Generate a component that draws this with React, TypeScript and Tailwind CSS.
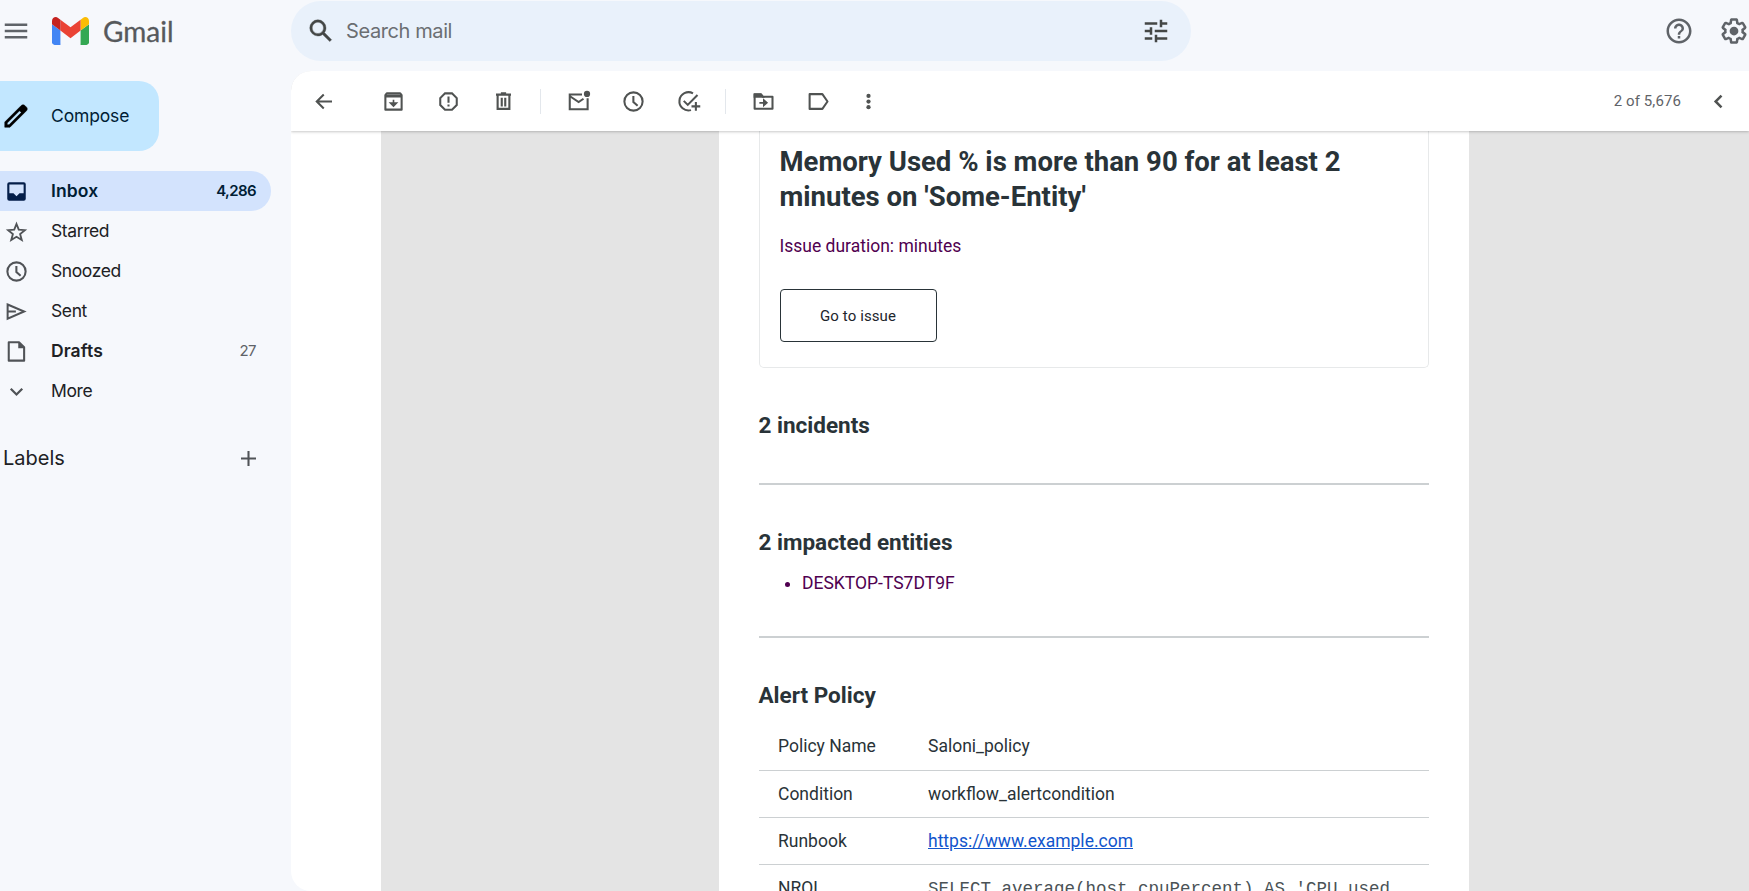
import type { ReactNode } from 'react';

type IconProps = { className?: string };

function Glyph({ children, className = 'size-[25px]', box = 20 }: { children: ReactNode; className?: string; box?: number }) {
  return (
    <svg viewBox={`0 0 ${box} ${box}`} className={className} fill="none" stroke="currentColor" strokeWidth={1.65}>
      {children}
    </svg>
  );
}

const MenuIcon = () => (
  <Glyph box={24} className="size-[30px] shrink-0">
    <path d="M3 7h18M3 12h18M3 17h18" strokeWidth={2} />
  </Glyph>
);

const GmailLogo = () => (
  <svg viewBox="52 42 88 66" className="h-7 w-[37px] shrink-0">
    <path fill="#4285f4" d="M58 108h14V74L52 59v43c0 3.32 2.69 6 6 6" />
    <path fill="#34a853" d="M120 108h14c3.32 0 6-2.69 6-6V59l-20 15" />
    <path fill="#fbbc04" d="M120 48v26l20-15v-8c0-7.42-8.47-11.65-14.4-7.2" />
    <path fill="#ea4335" d="M72 74V48l24 18 24-18v26L96 92" />
    <path fill="#c5221f" d="M52 51v8l20 15V48l-5.6-4.2c-5.94-4.45-14.4-.22-14.4 7.2" />
  </svg>
);

const SearchIcon = () => (
  <Glyph box={24} className="size-[30px] shrink-0">
    <path fill="currentColor" strokeWidth={0.3} d="M20.49 19l-5.73-5.73C15.53 12.2 16 10.91 16 9.5A6.5 6.5 0 1 0 9.5 16c1.41 0 2.7-.47 3.77-1.24L19 20.49 20.49 19zM5 9.5C5 7.01 7.01 5 9.5 5S14 7.01 14 9.5 11.99 14 9.5 14 5 11.99 5 9.5z" />
  </Glyph>
);

const TuneIcon = () => (
  <Glyph box={24} className="size-[30px] shrink-0">
    <path fill="currentColor" stroke="none" d="M3 17v2h6v-2H3zM3 5v2h10V5H3zm10 16v-2h8v-2h-8v-2h-2v6h2zM7 9v2H3v2h4v2h2V9H7zm14 4v-2H11v2h10zm-6-4h2V7h4V5h-4V3h-2v6z" />
  </Glyph>
);

const HelpIcon = () => (
  <Glyph box={24} className="size-[30px] shrink-0">
    <path fill="currentColor" stroke="none" d="M11 18h2v-2h-2v2zm1-16C6.48 2 2 6.48 2 12s4.48 10 10 10 10-4.48 10-10S17.52 2 12 2zm0 18c-4.41 0-8-3.59-8-8s3.59-8 8-8 8 3.59 8 8-3.59 8-8 8zm0-14c-2.21 0-4 1.79-4 4h2c0-1.1.9-2 2-2s2 .9 2 2c0 2-3 1.75-3 5h2c0-2.25 3-2.5 3-5 0-2.21-1.79-4-4-4z" />
  </Glyph>
);

const SettingsIcon = () => (
  <Glyph box={24} className="size-[30px] shrink-0">
    <path fill="currentColor" stroke="none" d="M13.85 22.25h-3.7c-.74 0-1.36-.54-1.45-1.27l-.27-1.89c-.27-.14-.53-.29-.79-.46l-1.8.72c-.7.26-1.47-.03-1.81-.65L2.2 15.53c-.35-.66-.2-1.44.36-1.88l1.53-1.19c-.01-.15-.02-.3-.02-.46 0-.15.01-.31.02-.46l-1.52-1.19c-.59-.45-.74-1.26-.37-1.88l1.85-3.19c.34-.62 1.11-.9 1.79-.63l1.81.73c.26-.17.52-.32.78-.46l.27-1.91c.09-.7.71-1.25 1.44-1.25h3.7c.74 0 1.36.54 1.45 1.27l.27 1.89c.27.14.53.29.79.46l1.8-.72c.71-.26 1.48.03 1.82.65l1.84 3.18c.36.66.2 1.44-.36 1.88l-1.52 1.19c.01.15.02.3.02.46s-.01.31-.02.46l1.52 1.19c.56.45.72 1.23.37 1.86l-1.86 3.22c-.34.62-1.11.9-1.8.63l-1.8-.72c-.26.17-.52.32-.78.46l-.27 1.91c-.1.68-.72 1.22-1.46 1.22zm-3.23-2h2.76l.37-2.55.53-.22c.44-.18.88-.44 1.34-.78l.45-.34 2.38.96 1.38-2.4-2.03-1.58.07-.56c.03-.26.06-.51.06-.78s-.03-.53-.06-.78l-.07-.56 2.03-1.58-1.39-2.4-2.39.96-.45-.35c-.42-.32-.87-.58-1.33-.77l-.52-.22-.37-2.55h-2.76l-.37 2.55-.53.21c-.44.19-.88.44-1.34.79l-.45.33-2.38-.95-1.39 2.39 2.03 1.58-.07.56a7 7 0 0 0-.06.79c0 .26.02.53.06.78l.07.56-2.03 1.58 1.38 2.4 2.39-.96.45.35c.43.33.86.58 1.33.77l.53.22.38 2.55z" />
    <circle cx="12" cy="12" r="3.5" fill="currentColor" stroke="none" />
  </Glyph>
);

const PencilIcon = () => (
  <Glyph box={24} className="size-[30px] shrink-0">
    <path fill="currentColor" strokeWidth={0.4} d="M20.41 4.94l-1.35-1.35c-.78-.78-2.05-.78-2.83 0L3 16.82V21h4.18L20.41 7.77c.79-.78.79-2.05 0-2.83zM6.41 19.06L5 19v-1.36l9.82-9.82 1.41 1.41-9.82 9.83z" />
  </Glyph>
);

const BackIcon = () => (
  <Glyph><path d="M10.2 4.4 4.6 10l5.6 5.6M4.6 10h12.2" /></Glyph>
);
const ArchiveIcon = () => (
  <Glyph>
    <path d="M4.6 3.5h10.8l1.100 1.400v11.600h-13V4.900z" strokeLinejoin="round" />
    <path d="M4 5.500h12" strokeWidth={2.400} />
    <path d="M10 8.600v4.500M7.700 11.300 10 13.600l2.300-2.300z" fill="currentColor" strokeWidth={1.300} />
  </Glyph>
);
const ReportIcon = () => (
  <Glyph>
    <path d="M7.200 3.500h5.600l3.800 3.800v5.500l-3.800 3.800H7.200l-3.800-3.800V7.300z" />
    <path d="M10 6v4.900M10 12.300v1.600" />
  </Glyph>
);
const TrashIcon = () => (
  <Glyph>
    <path d="M5.300 5v10.900h9.400V5M4 4.500h12M7.900 3.400h4.200" strokeWidth={1.700} />
    <path d="M8.600 7v7M11.400 7v7" strokeWidth={1.700} />
  </Glyph>
);
const UnreadIcon = () => (
  <Glyph>
    <path d="M12.800 4.400H3v11.800h14.300V7.400M3.200 5.800l6.900 4.600 3.900-2.600" />
    <circle cx="16.800" cy="3.900" r="2.500" fill="currentColor" stroke="none" />
  </Glyph>
);
const ClockIcon = ({ className }: IconProps) => (
  <Glyph className={className}>
    <circle cx="10" cy="10" r="7.300" />
    <path d="M9.900 5.500v4.900l3.400 3" />
  </Glyph>
);
const AddTaskIcon = () => (
  <Glyph>
    <path d="M13.600 3.500A7.300 7.300 0 1 0 12 16.900M6.200 9.500l3.200 3.200 7.800-7.900M15.900 10.400v7M12.400 13.900h7" />
  </Glyph>
);
const MoveIcon = () => (
  <Glyph>
    <path d="M2.900 4.400h5l1.600 1.800h7.700v9.600H2.900z" strokeLinejoin="round" />
    <path d="M2.900 4.300h5l1.500 1.900H2.900z" fill="currentColor" />
    <path d="M6.700 11h4.500M10.300 9l2.300 2-2.300 2z" fill="currentColor" strokeWidth={1.400} />
  </Glyph>
);
const LabelIcon = () => (
  <Glyph><path d="M2.900 4.100h10.200L17.200 10l-4.100 5.900H2.900z" strokeLinejoin="round" /></Glyph>
);
const MoreVertIcon = () => (
  <Glyph>
    <g fill="currentColor" stroke="none">
      <circle cx="10" cy="5.500" r="1.700" /><circle cx="10" cy="10" r="1.700" /><circle cx="10" cy="14.500" r="1.700" />
    </g>
  </Glyph>
);
const PrevIcon = () => (
  <Glyph><path d="M12.400 5.300 7.700 10l4.700 4.700" strokeWidth={2} /></Glyph>
);

const InboxIcon = () => (
  <Glyph>
    <path fill="currentColor" stroke="none" fillRule="evenodd" d="M4.200 2.600h11.600a1.600 1.600 0 0 1 1.600 1.600v11.600a1.600 1.600 0 0 1-1.600 1.600H4.200a1.600 1.600 0 0 1-1.600-1.600V4.200a1.600 1.600 0 0 1 1.600-1.600zM4.300 4.300v7.100h3.300L10 13.700l2.400-2.300h3.300V4.300z" />
  </Glyph>
);
const StarIcon = () => (
  <Glyph>
    <path d="m10 4 1.800 4.500 4.900.400-3.800 3.200 1.300 4.700-4.200-2.600-4.200 2.600 1.300-4.700-3.800-3.200 4.900-.400z" strokeWidth={1.500} />
  </Glyph>
);
const SendIcon = () => (
  <Glyph><path d="M2.900 4.400 16.100 10 2.900 15.700zM3 10h6.500" strokeWidth={1.600} /></Glyph>
);
const DraftIcon = () => (
  <Glyph>
    <path d="M3.800 2.600h8.200l4.100 4v10.700H3.800z" strokeLinejoin="round" />
    <path d="M11.400 2.200v5.100h4.900z" fill="currentColor" stroke="none" />
  </Glyph>
);
const ExpandIcon = () => (
  <Glyph><path d="m5.400 7.800 4.600 4.600 4.600-4.600" strokeWidth={1.800} /></Glyph>
);
const PlusIcon = () => (
  <Glyph><path d="M10 4v12M4 10h12" /></Glyph>
);

type Folder = { name: string; icon: ReactNode; count?: string; active?: boolean; bold?: boolean };

const folders: Folder[] = [
  { name: 'Inbox', icon: <InboxIcon />, count: '4,286', active: true, bold: true },
  { name: 'Starred', icon: <StarIcon /> },
  { name: 'Snoozed', icon: <ClockIcon /> },
  { name: 'Sent', icon: <SendIcon /> },
  { name: 'Drafts', icon: <DraftIcon />, count: '27', bold: true },
  { name: 'More', icon: <ExpandIcon /> },
];

function FolderRow({ name, icon, count, active, bold }: Folder) {
  return (
    <li className={`flex h-10 w-[271px] items-center rounded-r-full pr-[15px] pl-1 ${active ? 'bg-[#d3e3fd] text-[#001d35]' : 'text-[#202124]'}`}>
      <span className={`w-[47px] ${active ? 'text-[#041e49]' : 'text-[#505357]'}`}>{icon}</span>
      <span className={`grow text-[17.5px] ${bold ? 'font-semibold tracking-[0.1px]' : 'tracking-[-0.4px]'}`}>{name}</span>
      {count && <span className={`text-[15px] tracking-[-0.6px] ${active ? 'font-semibold' : 'text-[#5f6368]'}`}>{count}</span>}
    </li>
  );
}

function Sidebar() {
  return (
    <aside className="w-[291px] shrink-0 pt-2.5">
      <button className="flex h-[70px] w-[159px] items-center rounded-r-[20px] bg-[#c2e7ff] text-[17.5px] tracking-[-0.15px] text-[#001d35]">
        <span className="ml-px w-[50px] text-black"><PencilIcon /></span>
        Compose
      </button>
      <ul className="mt-5">
        {folders.map((f) => <FolderRow key={f.name} {...f} />)}
      </ul>
      <div className="mt-[27px] flex h-10 items-center justify-between pr-[30px] pl-[3px] text-[20px] text-[#202124]">
        <h3>Labels</h3>
        <span className="text-[#505357]"><PlusIcon /></span>
      </div>
    </aside>
  );
}

function Header() {
  return (
    <header className="flex h-[71px] shrink-0 items-start pt-px">
      <div className="flex h-[60px] w-[291px] items-center pl-px text-[#5f6368]">
        <MenuIcon />
        <span className="ml-[21px]"><GmailLogo /></span>
        <span className="ml-3.5 font-[Lato] text-[28px] text-[#56595c] [-webkit-text-stroke:0.3px_#56595c]">Gmail</span>
      </div>
      <div className="flex h-[60px] w-[900px] items-center rounded-full bg-[#e9f1fb] pr-5 pl-[15px] text-[#444746]">
        <SearchIcon />
        <span className="ml-2.5 grow text-[20px] tracking-[-0.4px] text-[#6b6e72]">Search mail</span>
        <TuneIcon />
      </div>
      <div className="ml-auto flex h-[60px] items-center gap-[25px] text-[#5f6368]">
        <HelpIcon />
        <SettingsIcon />
      </div>
    </header>
  );
}

function Tool({ children, className = 'w-[55px]' }: { children: ReactNode; className?: string }) {
  return <button className={`flex h-[60px] shrink-0 items-center justify-center ${className}`}>{children}</button>;
}

const Divider = () => <span className="mr-[10px] ml-[9px] h-[25px] w-px bg-[#e3e7ec]" />;

function Toolbar() {
  return (
    <div className="relative z-10 flex h-[60px] shrink-0 items-center rounded-tl-[20px] bg-white pl-[5px] text-[#505352] shadow-[0_1px_3px_rgba(0,0,0,0.22)]">
      <Tool className="mr-[15px] w-[55px]"><BackIcon /></Tool>
      <Tool><ArchiveIcon /></Tool>
      <Tool><ReportIcon /></Tool>
      <Tool><TrashIcon /></Tool>
      <Divider />
      <Tool><UnreadIcon /></Tool>
      <Tool><ClockIcon /></Tool>
      <Tool><AddTaskIcon /></Tool>
      <Divider />
      <Tool><MoveIcon /></Tool>
      <Tool><LabelIcon /></Tool>
      <Tool className="w-[45px]"><MoreVertIcon /></Tool>
      <span className="ml-auto font-[Roboto] text-[15px] tracking-[0.1px] text-[#5f6368]">2 of 5,676</span>
      <Tool className="mr-[6px] ml-[12px] w-[50px]"><PrevIcon /></Tool>
    </div>
  );
}

const policyRows: { label: string; value: ReactNode; height: string }[] = [
  { label: 'Policy Name', value: 'Saloni_policy', height: 'h-[47px] pb-0.5' },
  { label: 'Condition', value: 'workflow_alertcondition', height: 'h-[47px]' },
  { label: 'Runbook', value: <a className="text-[#1155cc] underline">https://www.example.com</a>, height: 'h-[47px]' },
  { label: 'NRQL', value: <code className="font-['Liberation_Mono',monospace] text-[17.5px] text-[#4a5256]">SELECT average(host.cpuPercent) AS 'CPU used</code>, height: 'h-[48px]' },
];

function Message() {
  return (
    <div className="ml-[90px] flex grow justify-start overflow-hidden bg-[#e4e4e4] pl-[338px] font-[Roboto]">
      <article className="w-[750px] shrink-0 bg-white pr-[41px] pl-[39.500px] text-[17.500px] text-[#293338]">
        <section className="h-[237px] w-[670px] rounded-b-[5px] border border-t-0 border-[#e7e9ea] px-5 pt-[13px]">
          <h1 className="text-[27.500px] leading-[35px] font-bold">Memory Used % is more than 90 for at least 2 minutes on 'Some-Entity'</h1>
          <p className="mt-[19px] leading-[26px] text-[#500050]">Issue duration: minutes</p>
          <button className="mt-[30px] flex h-[53px] w-[157px] items-center justify-center rounded-[4px] border border-[#293338] pt-0.5 text-[15px] tracking-[0.1px] text-[#1d252c]">Go to issue</button>
        </section>
        <h2 className="mt-[42px] h-[73px] text-[22.500px] leading-[30px] font-bold">2 incidents</h2>
        <hr className="w-[670px] border-t-2 border-[#ccd0d2]" />
        <h2 className="mt-[42px] text-[22.500px] leading-[30px] font-bold">2 impacted entities</h2>
        <ul className="mt-[12px] list-disc pl-[43.500px] leading-[28px] text-[#500050]">
          <li>DESKTOP-TS7DT9F</li>
        </ul>
        <hr className="mt-[39px] w-[670px] border-t-2 border-[#ccd0d2]" />
        <h2 className="mt-[42px] text-[22.500px] leading-[30px] font-bold">Alert Policy</h2>
        <dl className="mt-[14px] w-[670px]">
          {policyRows.map((r) => (
            <div key={r.label} className={`flex items-center border-b border-[#ccd0d2] pl-[19.500px] whitespace-nowrap ${r.height}`}>
              <dt className="w-[150px] shrink-0">{r.label}</dt>
              <dd>{r.value}</dd>
            </div>
          ))}
        </dl>
      </article>
    </div>
  );
}

export default function App() {
  return (
    <div className="flex h-[891px] w-[1749px] flex-col overflow-hidden bg-[#f6f8fc] font-[Inter,sans-serif]">
      <Header />
      <div className="flex min-h-0 grow">
        <Sidebar />
        <main className="flex min-w-0 grow flex-col overflow-hidden rounded-l-[20px] bg-white">
          <Toolbar />
          <Message />
        </main>
      </div>
    </div>
  );
}
